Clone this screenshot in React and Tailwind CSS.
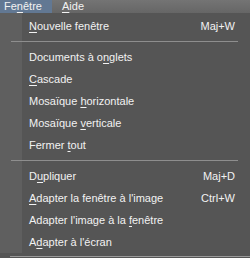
import React from "react";

const U = ({ children }) => (
  <span className="underline underline-offset-[2px] decoration-[1px]">{children}</span>
);

const Item = ({ children, shortcut }) => (
  <div className="h-[22px] flex items-center pl-[29px] pr-[15px]">
    <span className="flex-1 whitespace-nowrap">{children}</span>
    {shortcut && <span className="whitespace-nowrap">{shortcut}</span>}
  </div>
);

const Sep = () => (
  <div className="h-[9px] pt-[4px] pl-[11px] pr-[12px]">
    <div className="h-px bg-[#8e8e8e]" />
  </div>
);

export default function App() {
  return (
    <div
      className="w-[250px] h-[258px] overflow-hidden bg-[#555555] text-[#f2f2f2] text-[11px] leading-none flex flex-col"
      style={{ fontFamily: '"Liberation Sans", Arial, sans-serif' }}
    >
      <div className="h-[14px] flex items-stretch bg-gradient-to-b from-[#747474] to-[#666666]">
        <div className="w-[52px] bg-[#627893] flex items-center pl-[4px]">
          Fe<U>n</U>être
        </div>
        <div className="flex items-center pl-[10px]">
          <U>A</U>ide
        </div>
      </div>
      <div className="flex-1 flex flex-col relative bg-[linear-gradient(to_right,#5f5f5f_0px,#5f5f5f_22px,#555555_22px)]">
        <div className="pt-[2px]">
          <Item shortcut="Maj+W">
            <U>N</U>ouvelle fenêtre
          </Item>
          <Sep />
          <Item>
            Documents à o<U>n</U>glets
          </Item>
          <Item>
            <U>C</U>ascade
          </Item>
          <Item>
            Mosaïque <U>h</U>orizontale
          </Item>
          <Item>
            Mosaïque <U>v</U>erticale
          </Item>
          <Item>
            Fermer <U>t</U>out
          </Item>
          <Sep />
          <Item shortcut="Maj+D">
            D<U>u</U>pliquer
          </Item>
          <Item shortcut="Ctrl+W">
            <U>A</U>dapter la fenêtre à l'image
          </Item>
          <Item>
            Adapter l'image à la <U>f</U>enêtre
          </Item>
          <Item>
            A<U>d</U>apter à l'écran
          </Item>
        </div>
        <div className="absolute left-[8px] top-[85px] -rotate-[40deg] text-[18px] italic text-[#5d5d5d] pointer-events-none" style={{ fontFamily: '"Liberation Serif", serif' }}>
        </div>
      </div>
      <div className="h-[3px] bg-[#555555]" />
      <div className="h-px ml-[10px] bg-[#9a9a9a]" />
      <div className="h-px bg-[#555555]" />
    </div>
  );
}
